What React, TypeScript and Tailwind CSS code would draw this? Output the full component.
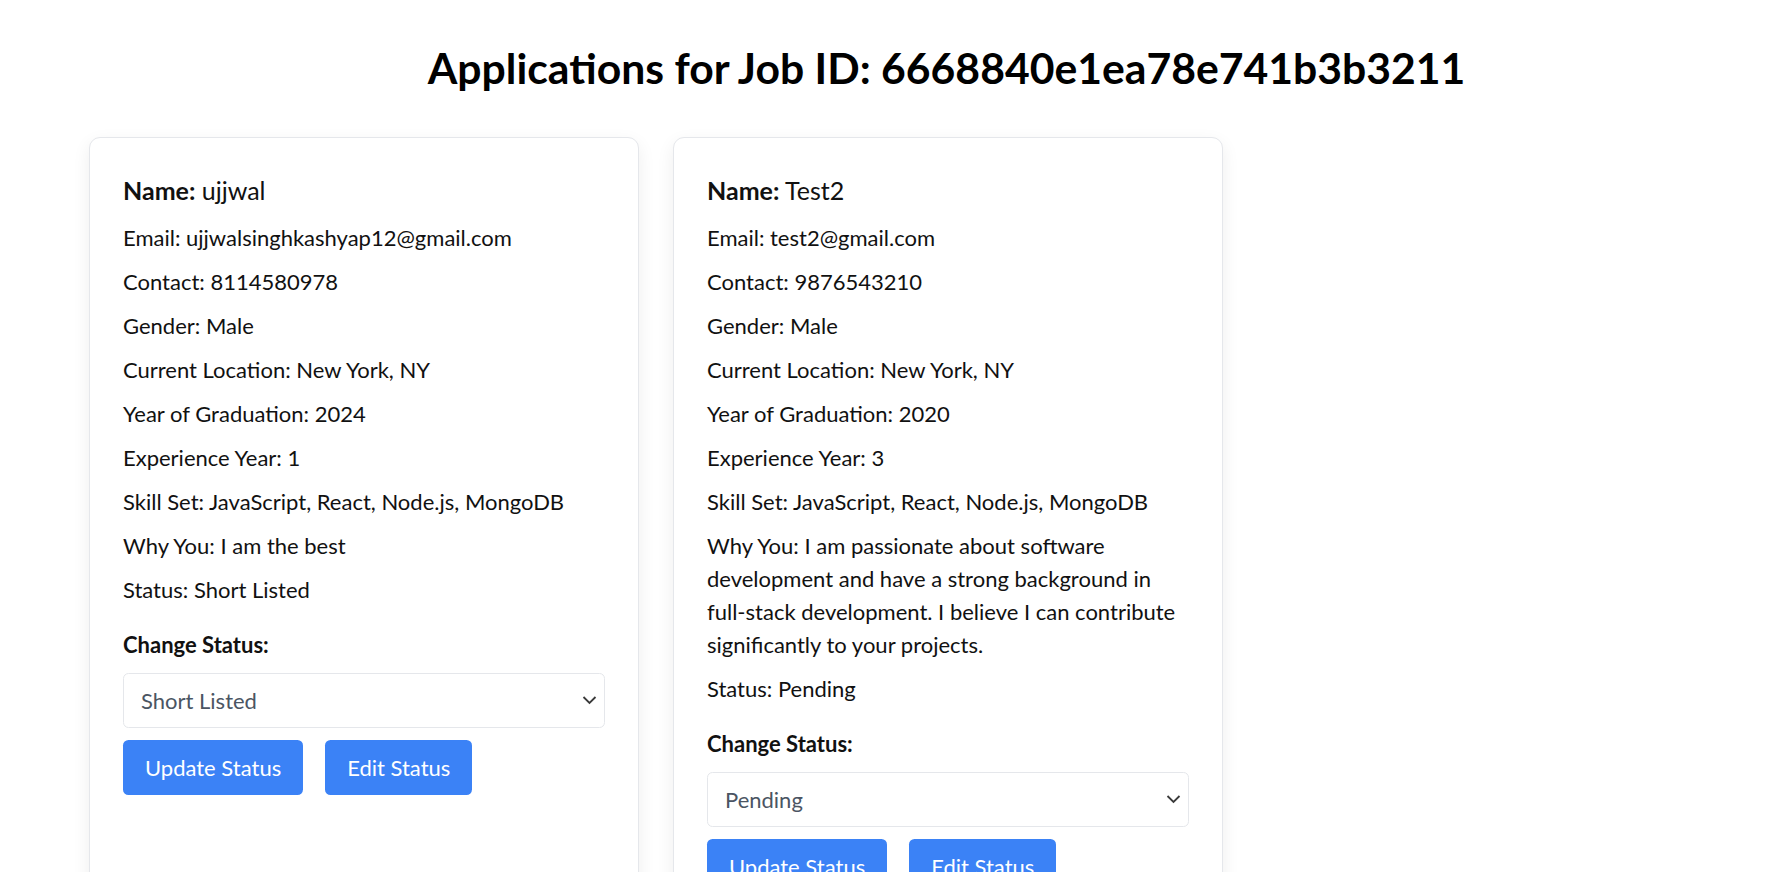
import React from "react";

type Applicant = {
  name: string;
  email: string;
  contact: string;
  gender: string;
  location: string;
  graduation: string;
  experience: string;
  skills: string;
  whyYou: string;
  status: string;
};

const applicants: Applicant[] = [
  {
    name: "ujjwal",
    email: "ujjwalsinghkashyap12@gmail.com",
    contact: "8114580978",
    gender: "Male",
    location: "New York, NY",
    graduation: "2024",
    experience: "1",
    skills: "JavaScript, React, Node.js, MongoDB",
    whyYou: "I am the best",
    status: "Short Listed",
  },
  {
    name: "Test2",
    email: "test2@gmail.com",
    contact: "9876543210",
    gender: "Male",
    location: "New York, NY",
    graduation: "2020",
    experience: "3",
    skills: "JavaScript, React, Node.js, MongoDB",
    whyYou:
      "I am passionate about software development and have a strong background in full-stack development. I believe I can contribute significantly to your projects.",
    status: "Pending",
  },
];

const Row: React.FC<{ children: React.ReactNode }> = ({ children }) => (
  <p className="text-[22px] leading-[33px] mb-[11px]">{children}</p>
);

const ApplicationCard: React.FC<{ app: Applicant }> = ({ app }) => {
  return (
    <div className="w-[550px] shrink-0 bg-white border border-[#e5e7eb] rounded-[11px] shadow-[0_6px_18px_rgba(0,0,0,0.07)] p-[33px]">
      <h2 className="text-[25px] leading-[38.5px] mb-[11px]">
        <span className="font-bold">Name:</span> {app.name}
      </h2>
      <Row>Email: {app.email}</Row>
      <Row>Contact: {app.contact}</Row>
      <Row>Gender: {app.gender}</Row>
      <Row>Current Location: {app.location}</Row>
      <Row>Year of Graduation: {app.graduation}</Row>
      <Row>Experience Year: {app.experience}</Row>
      <Row>Skill Set: {app.skills}</Row>
      <Row>Why You: {app.whyYou}</Row>
      <Row>Status: {app.status}</Row>

      <div className="pt-[11px]">
        <label className="block text-[22px] leading-[33px] font-bold mb-[12px]">Change Status:</label>
        <div className="relative">
          <select
            defaultValue={app.status}
            className="w-full h-[55px] appearance-none bg-white border border-[#e5e7eb] rounded-[5.5px] px-[17px] text-[22px] text-[#4b5563] outline-none"
          >
            <option>Pending</option>
            <option>Short Listed</option>
            <option>Rejected</option>
            <option>Hired</option>
          </select>
          <svg
            className="absolute right-[8px] top-1/2 -translate-y-1/2 pointer-events-none"
            width="15"
            height="10"
            viewBox="0 0 15 10"
            fill="none"
          >
            <path d="M1.5 2l6 6 6-6" stroke="#3a3a3a" strokeWidth="1.8" />
          </svg>
        </div>
        <div className="flex gap-[22px] mt-[12px]">
          <button className="h-[55px] px-[22px] bg-[#3b82f6] text-white text-[22px] rounded-[5.5px]">
            Update Status
          </button>
          <button className="h-[55px] px-[22px] bg-[#3b82f6] text-white text-[22px] rounded-[5.5px]">
            Edit Status
          </button>
        </div>
      </div>
    </div>
  );
};

export default function App() {
  return (
    <div className="min-h-screen bg-white text-[#111] font-['Lato',sans-serif]">
      <h1 className="pl-[105px] pt-[42px] text-center text-[42.7px] leading-[52px] font-bold text-black">
        Applications for Job ID: 6668840e1ea78e741b3b3211
      </h1>
      <div className="flex gap-[34px] px-[89px] mt-[43px]">
        {applicants.map((a) => (
          <ApplicationCard key={a.email} app={a} />
        ))}
      </div>
    </div>
  );
}
